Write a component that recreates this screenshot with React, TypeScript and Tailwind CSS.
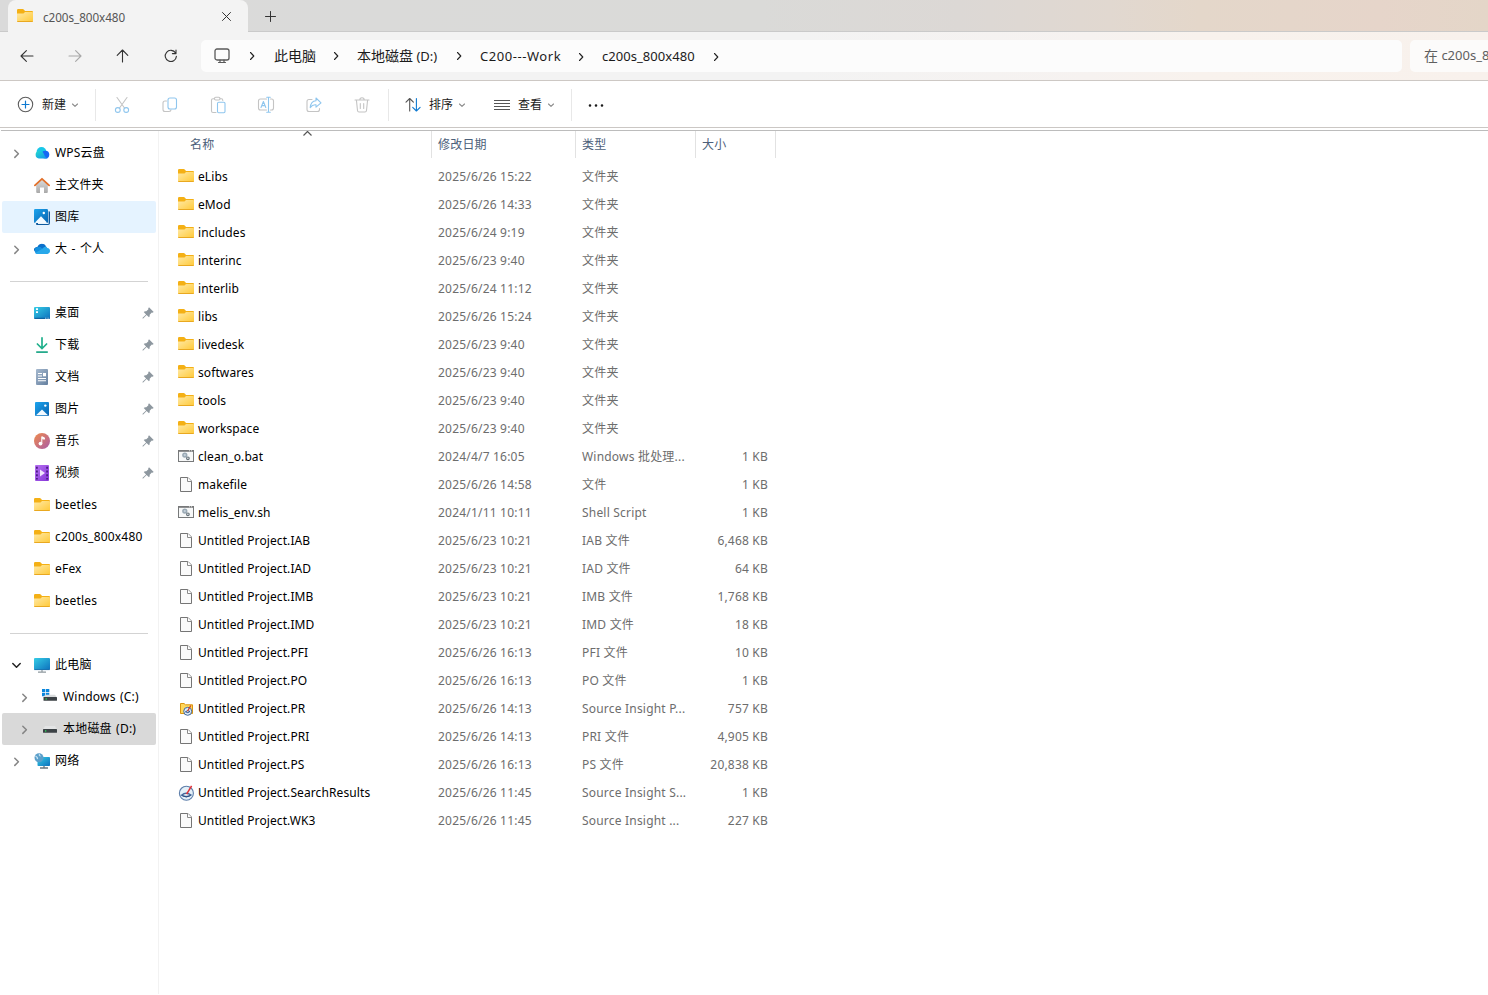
import type { ReactNode } from 'react';
import clsx from 'clsx';

type IconName =
  | 'folder' | 'file' | 'script' | 'insight' | 'search'
  | 'wps' | 'home' | 'gallery' | 'onedrive' | 'desktop' | 'download' | 'document'
  | 'picture' | 'music' | 'video' | 'pc' | 'windows' | 'disk' | 'network';

type FileRow = { name: string; date: string; type: string; size?: string; icon: IconName };

type NavRow = {
  label?: string;
  icon?: IconName;
  chevron?: 'right' | 'down';
  pinned?: boolean;
  child?: boolean;
  state?: 'hover' | 'selected';
};

const FILES: FileRow[] = [
  { name: 'eLibs', date: '2025/6/26 15:22', type: '文件夹', icon: 'folder' },
  { name: 'eMod', date: '2025/6/26 14:33', type: '文件夹', icon: 'folder' },
  { name: 'includes', date: '2025/6/24 9:19', type: '文件夹', icon: 'folder' },
  { name: 'interinc', date: '2025/6/23 9:40', type: '文件夹', icon: 'folder' },
  { name: 'interlib', date: '2025/6/24 11:12', type: '文件夹', icon: 'folder' },
  { name: 'libs', date: '2025/6/26 15:24', type: '文件夹', icon: 'folder' },
  { name: 'livedesk', date: '2025/6/23 9:40', type: '文件夹', icon: 'folder' },
  { name: 'softwares', date: '2025/6/23 9:40', type: '文件夹', icon: 'folder' },
  { name: 'tools', date: '2025/6/23 9:40', type: '文件夹', icon: 'folder' },
  { name: 'workspace', date: '2025/6/23 9:40', type: '文件夹', icon: 'folder' },
  { name: 'clean_o.bat', date: '2024/4/7 16:05', type: 'Windows 批处理...', size: '1 KB', icon: 'script' },
  { name: 'makefile', date: '2025/6/26 14:58', type: '文件', size: '1 KB', icon: 'file' },
  { name: 'melis_env.sh', date: '2024/1/11 10:11', type: 'Shell Script', size: '1 KB', icon: 'script' },
  { name: 'Untitled Project.IAB', date: '2025/6/23 10:21', type: 'IAB 文件', size: '6,468 KB', icon: 'file' },
  { name: 'Untitled Project.IAD', date: '2025/6/23 10:21', type: 'IAD 文件', size: '64 KB', icon: 'file' },
  { name: 'Untitled Project.IMB', date: '2025/6/23 10:21', type: 'IMB 文件', size: '1,768 KB', icon: 'file' },
  { name: 'Untitled Project.IMD', date: '2025/6/23 10:21', type: 'IMD 文件', size: '18 KB', icon: 'file' },
  { name: 'Untitled Project.PFI', date: '2025/6/26 16:13', type: 'PFI 文件', size: '10 KB', icon: 'file' },
  { name: 'Untitled Project.PO', date: '2025/6/26 16:13', type: 'PO 文件', size: '1 KB', icon: 'file' },
  { name: 'Untitled Project.PR', date: '2025/6/26 14:13', type: 'Source Insight P...', size: '757 KB', icon: 'insight' },
  { name: 'Untitled Project.PRI', date: '2025/6/26 14:13', type: 'PRI 文件', size: '4,905 KB', icon: 'file' },
  { name: 'Untitled Project.PS', date: '2025/6/26 16:13', type: 'PS 文件', size: '20,838 KB', icon: 'file' },
  { name: 'Untitled Project.SearchResults', date: '2025/6/26 11:45', type: 'Source Insight S...', size: '1 KB', icon: 'search' },
  { name: 'Untitled Project.WK3', date: '2025/6/26 11:45', type: 'Source Insight ...', size: '227 KB', icon: 'file' },
];

// A row without a label is a separator
const NAV: NavRow[] = [
  { label: 'WPS云盘', icon: 'wps', chevron: 'right' },
  { label: '主文件夹', icon: 'home' },
  { label: '图库', icon: 'gallery', state: 'hover' },
  { label: '大 - 个人', icon: 'onedrive', chevron: 'right' },
  {},
  { label: '桌面', icon: 'desktop', pinned: true },
  { label: '下载', icon: 'download', pinned: true },
  { label: '文档', icon: 'document', pinned: true },
  { label: '图片', icon: 'picture', pinned: true },
  { label: '音乐', icon: 'music', pinned: true },
  { label: '视频', icon: 'video', pinned: true },
  { label: 'beetles', icon: 'folder' },
  { label: 'c200s_800x480', icon: 'folder' },
  { label: 'eFex', icon: 'folder' },
  { label: 'beetles', icon: 'folder' },
  {},
  { label: '此电脑', icon: 'pc', chevron: 'down' },
  { label: 'Windows (C:)', icon: 'windows', chevron: 'right', child: true },
  { label: '本地磁盘 (D:)', icon: 'disk', chevron: 'right', child: true, state: 'selected' },
  { label: '网络', icon: 'network', chevron: 'right' },
];

const ICONS: Record<IconName, ReactNode> = {
  folder: (
    <>
      <path d="M0 1.2Q0 0 1.2 0H5.6Q6.4 0 7 .7L8 2H15Q16 2 16 3V6H0z" fill="#f4b015" />
      <path d="M0 4.6H6.5L8 3H15.2Q16 3 16 3.8V12Q16 13 15 13H1Q0 13 0 12z" fill="url(#folderFill)" />
      <path d="M.3 12.5H15.7" stroke="#e9a820" />
    </>
  ),
  file: (
    <>
      <path d="M2.5.5H10L13.5 4V14.5H2.5z" fill="#fafafa" stroke="#757575" />
      <path d="M9.5.5V4.5H13.5" fill="#fff" stroke="#8a8a8a" />
    </>
  ),
  script: (
    <>
      <rect x=".5" y="1.5" width="15" height="11" fill="#f7f8f8" stroke="#77797a" />
      <path d="M0 2H16" stroke="#77797a" strokeWidth="1.6" />
      <path d="M11 1.8H15" stroke="#dedede" strokeWidth="1" strokeDasharray="1 1" />
      <circle cx="6.8" cy="6.1" r="1.9" fill="#c4d0d9" stroke="#9aa9b4" strokeWidth="1.5" />
      <circle cx="9.9" cy="9.3" r="1.3" fill="#fff" stroke="#66727a" strokeWidth="1.2" />
    </>
  ),
  insight: (
    <>
      <path d="M2.5 2.5H6L7.5 3.8H14.5V12.5H2.5z" fill="#ffd75a" stroke="#d99411" />
      <circle cx="9.7" cy="10.3" r="4" fill="#dcebf6" stroke="#44689a" />
      <path d="M7.4 10.8Q9.5 8.7 12 10.5Q10 12.7 7.4 10.8" fill="#fff" stroke="#2d5590" />
      <path d="M9.5 10.3L12.8 4.5" stroke="#cf3f28" strokeWidth="1.3" />
    </>
  ),
  search: (
    <>
      <circle cx="8.4" cy="8.2" r="7" fill="#e4f0f8" stroke="#5d7eaa" strokeWidth="1.1" />
      <path d="M3.5 10.2Q8 6.5 13 10Q8.3 13 3.5 10.2z" fill="#fff" stroke="#45699c" strokeWidth="1.4" />
      <path d="M4.5 10.8Q8.5 13.2 12.5 10.6" fill="none" stroke="#274b80" />
      <path d="M8.6 9.2L13.6 .8" stroke="#e03036" strokeWidth="1.5" />
    </>
  ),
  wps: (
    <>
      <circle cx="7.5" cy="7" r="4.9" fill="#18c7e8" />
      <circle cx="11.4" cy="9.6" r="3.9" fill="#1668f3" />
      <path d="M4.8 6Q8.5 5.4 10 9.2T14 13.5H4.8A3.8 3.8 0 0 1 4.8 6z" fill="url(#wpsFill)" />
    </>
  ),
  home: (
    <>
      <path d="M2.2 8L8 2.6L13.8 8V15Q13.8 16 12.8 16H10V10.5H6V16H3.2Q2.2 16 2.2 15z" fill="url(#homeFill)" />
      <path d="M.9 8.4L8 1.8L15.1 8.4" fill="none" stroke="#e2702a" strokeWidth="1.8" strokeLinecap="round" strokeLinejoin="round" />
    </>
  ),
  gallery: (
    <>
      <path d="M4 2.2H15Q16 2.2 16 3.2V14Q16 16 14 16H3Q2 16 2 15z" fill="#0f5a9e" />
      <path d="M4 2H14.6V15H4z" fill="#e8f4fc" />
      <rect width="14" height="14" rx="1.2" fill="url(#blueFill)" />
      <circle cx="9.8" cy="4" r="1.2" fill="#fff" />
      <path d="M1 13.6L7 7.3L13 13.6Q12.6 14 12 14H2z" fill="#f3faff" />
    </>
  ),
  onedrive: (
    <>
      <path d="M3.3 6A5 5 0 0 1 12.2 5.4Q10 6 8.5 8.5L3 11Q0 10.5 0 8.5T3.3 6z" fill="#0364b8" />
      <path d="M3.5 5.9Q6 5 8.6 7L15 10.8Q14 13 12.3 13H4A3.6 3.6 0 0 1 3.5 5.9z" fill="#1490df" />
      <path d="M8.4 7.8Q9.7 5 12.4 5.7Q13 6.1 13.3 7Q16 7.4 16 10T12.5 13H4Q2.2 13 1.2 12z" fill="#28a8ea" />
      <path d="M4.4 4.8Q7.5 1 11.5 4.4Q10.5 5 8.5 7.4Q6.3 5.8 4.4 4.8z" fill="#0b70cc" />
    </>
  ),
  desktop: (
    <>
      <rect y="2" width="16" height="12" rx="1" fill="url(#cyanFill)" />
      <path d="M.5 13.3H15.5" stroke="#0b5a9a" />
      <path d="M2 4.2H4M2 7.2H4" stroke="#fff" strokeWidth="1.8" />
      <path d="M11 13.2H15" stroke="#cde8f8" strokeWidth=".8" strokeDasharray="1 .6" />
    </>
  ),
  download: (
    <>
      <path d="M8 .8V11M3.4 7L8 11.5L12.6 7" fill="none" stroke="#20b08c" strokeWidth="1.7" strokeLinecap="round" />
      <path d="M2.2 15.1H13.8" stroke="#1ba686" strokeWidth="1.7" />
    </>
  ),
  document: (
    <>
      <rect x="2" width="12" height="16" rx="1" fill="url(#docFill)" />
      <path d="M4 4.5H8M4 7H8M4 9.5H12M4 11.8H12" stroke="#fff" strokeWidth="1.1" />
      <rect x="9" y="4" width="3" height="3.3" fill="#fff" />
    </>
  ),
  picture: (
    <>
      <rect x="1" y="1" width="14" height="14" rx="1" fill="url(#blueFill)" />
      <circle cx="11.3" cy="4.6" r="1.2" fill="#fff" />
      <path d="M2 14.3L8 8.6L14 14.3z" fill="#f3faff" />
    </>
  ),
  music: (
    <>
      <circle cx="8" cy="8" r="8" fill="url(#musicFill)" />
      <circle cx="6.5" cy="10.6" r="1.9" fill="#fff" />
      <path d="M7.8 10.6V3.7L10.4 4.8V6.2L8.2 5.6" fill="#fff" stroke="#fff" strokeWidth="1" />
    </>
  ),
  video: (
    <>
      <rect x="1" width="14" height="16" rx="1" fill="url(#videoFill)" />
      <path d="M2.9 1.8V14.5M13.1 1.8V14.5" stroke="#4b1d85" strokeWidth="1.8" strokeDasharray="2 1.7" />
      <path d="M6 4.6L11 8L6 11.4z" fill="#f1e5fc" />
    </>
  ),
  pc: (
    <>
      <rect y="1" width="16" height="12" rx="1" fill="url(#cyanFill)" />
      <path d="M.3 12.6H15.7" stroke="#1c6da8" strokeWidth=".8" />
      <path d="M8 13V15M4 15.2H12" stroke="#8f999f" strokeWidth="1.2" />
    </>
  ),
  windows: (
    <>
      <path d="M0 0H3.3V3.3H0zM4 0H7.3V3.3H4zM0 4H3.3V7.3H0zM4 4H7.3V7.3H4z" fill="#0a86dc" />
      <path d="M3 5.8H13L15 8.5H1.5z" fill="#d9dcdd" />
      <rect x="1.5" y="8" width="13.5" height="3.8" rx=".5" fill="#3c4246" />
      <rect x="3.5" y="9.3" width="1.3" height="1.3" fill="#2de35b" />
    </>
  ),
  disk: (
    <>
      <path d="M3 5H13L15 8.5H1z" fill="#e3e4e5" />
      <rect x="1" y="8" width="14" height="3.8" rx=".5" fill="#3c4246" />
      <rect x="3" y="9.3" width="1.3" height="1.3" fill="#2de35b" />
    </>
  ),
  network: (
    <>
      <rect x="3.5" y="4" width="12.5" height="9" rx=".8" fill="url(#cyanFill)" />
      <path d="M10 13V15M6 15H14" stroke="#68767f" strokeWidth="1.3" />
      <circle cx="5" cy="4.8" r="4.5" fill="#5b9fca" />
      <path d="M1.5 2.9Q4 4.4 3.4 6.1M5.4 1Q4.8 2.5 6.5 3.2" fill="none" stroke="#c5e2f2" strokeWidth="1.2" />
    </>
  ),
};

function IconDefs() {
  return (
    <svg width="0" height="0" className="absolute">
      <defs>
        <linearGradient id="folderFill" x1="0" y1="0" x2="1" y2="1">
          <stop offset="0" stopColor="#ffe9a6" />
          <stop offset="1" stopColor="#ffc937" />
        </linearGradient>
        <linearGradient id="wpsFill" x1="0" y1="0" x2="1" y2="1">
          <stop offset="0" stopColor="#22dccb" />
          <stop offset="1" stopColor="#128df0" />
        </linearGradient>
        <linearGradient id="homeFill" x1="0" y1="0" x2="0" y2="1">
          <stop offset="0" stopColor="#dcdcdc" />
          <stop offset="1" stopColor="#a9a9a9" />
        </linearGradient>
        <linearGradient id="blueFill" x1="0" y1="0" x2="1" y2="1">
          <stop offset="0" stopColor="#1ca4ee" />
          <stop offset="1" stopColor="#0863b0" />
        </linearGradient>
        <linearGradient id="cyanFill" x1="0" y1="0" x2="1" y2="1">
          <stop offset="0" stopColor="#35cde6" />
          <stop offset="1" stopColor="#0d70bd" />
        </linearGradient>
        <linearGradient id="docFill" x1="0" y1="0" x2="1" y2="1">
          <stop offset="0" stopColor="#a6b9cf" />
          <stop offset="1" stopColor="#647f9f" />
        </linearGradient>
        <linearGradient id="musicFill" x1="0" y1="0" x2="1" y2="1">
          <stop offset="0" stopColor="#f08b4b" />
          <stop offset="1" stopColor="#a95ba8" />
        </linearGradient>
        <linearGradient id="videoFill" x1="0" y1="0" x2="1" y2="1">
          <stop offset="0" stopColor="#b56ff0" />
          <stop offset="1" stopColor="#8636d8" />
        </linearGradient>
      </defs>
    </svg>
  );
}

function Icon({ name, className }: { name: IconName; className?: string }) {
  return (
    <svg width="16" height="16" viewBox="0 0 16 16" className={clsx('shrink-0 overflow-visible', className)}>
      {ICONS[name]}
    </svg>
  );
}

function Line({ children, className, size = 18 }: { children: ReactNode; className?: string; size?: number }) {
  return (
    <svg
      width={size}
      height={size}
      viewBox={`0 0 ${size} ${size}`}
      fill="none"
      stroke="currentColor"
      strokeWidth="1.1"
      strokeLinecap="round"
      strokeLinejoin="round"
      className={clsx('shrink-0', className)}
    >
      {children}
    </svg>
  );
}

function TitleBar() {
  return (
    <div className="flex h-8 items-end border-b border-[#cacaca] bg-[linear-gradient(90deg,#dadada_0,#dadad8_760px,#dcd8d5_960px,#e1d8d0_1110px,#e4d7ca_1200px,#e6d5ca_1380px,#e4d6c8_1488px)] pl-2">
      <div className="-mb-px flex h-8 w-60 items-center rounded-t-lg bg-[#f3f3f3] pl-[9px] pr-[14px]">
        <Icon name="folder" className="mt-[2px]" />
        <span className="ml-[10px] mt-px grow text-[11.7px] leading-4 tracking-[-0.05px] text-[#555]">c200s_800x480</span>
        <Line size={15} className="text-[#333]">
          <path d="M3.5 3.5L11.5 11.5M11.5 3.5L3.5 11.5" strokeWidth="1" />
        </Line>
      </div>
      <Line size={15} className="mb-[7px] ml-[15px] text-[#333]">
        <path d="M7.5 2.5V12.5M2.5 7.5H12.5" strokeWidth="1" />
      </Line>
    </div>
  );
}

function Crumb({ cjk, latin, className }: { cjk?: string; latin?: string; className: string }) {
  return (
    <div className={clsx('flex shrink-0 items-center', className)}>
      <span className="grow whitespace-pre">
        {cjk && <span className="text-sm">{cjk}</span>}
        {latin}
      </span>
      <Line size={10} className="text-[#222]">
        <path d="M3.5 1.5L6.8 5L3.5 8.5" />
      </Line>
    </div>
  );
}

function AddressBar() {
  return (
    <div className="flex h-[49px] items-center border-b border-[#cdc8c4] bg-[linear-gradient(90deg,#f3f3f3_0,#f3f3f3_800px,#f6f2f0_1090px,#f8f2ed_1200px,#f8f1ec_1488px)]">
      <div className="flex w-[201px] shrink-0 gap-[30px] pl-[18px] text-[#333]">
        <Line><path d="M15 9H3.2M8.4 3.6L3 9L8.4 14.4" /></Line>
        <Line className="text-[#a8a8a8]"><path d="M3 9H14.8M9.6 3.6L15 9L9.6 14.4" /></Line>
        <Line><path d="M8.5 15V3.2M3.2 8.4L8.5 3L13.8 8.4" /></Line>
        <Line><path d="M13.6 6A5.6 5.6 0 1 0 14.4 9.4M14 3V6.6H10.4" /></Line>
      </div>
      <div className="flex h-8 w-[1201px] shrink-0 items-center rounded-[5px] bg-[#fcfcfc] pl-3 text-[13px] text-[#1b1b1b]">
        <Line className="text-[#5a5a5a]">
          <rect x="2" y="2" width="14" height="11" rx="2" strokeWidth="1.3" />
          <path d="M7 13V15.3M11 13V15.3M5.5 15.5H12.5" strokeWidth="1.2" />
        </Line>
        <Line size={10} className="ml-4 text-[#222]">
          <path d="M3.5 1.5L6.8 5L3.5 8.5" />
        </Line>
        <Crumb cjk="此电脑" className="ml-[17px] w-[67px]" />
        <Crumb cjk="本地磁盘" latin=" (D:)" className="ml-4 w-[107px]" />
        <Crumb latin="C200---Work" className="ml-4 w-[106px] pt-px tracking-[0.55px]" />
        <Crumb latin="c200s_800x480" className="ml-4 w-[119px] pt-px tracking-[0.05px]" />
      </div>
      <div className="ml-2 flex h-8 grow items-center overflow-hidden whitespace-pre rounded-l-[5px] bg-[#fcfbfa] pl-[14px] text-[13px] text-[#5f5f5f]">
        <span className="text-sm">在</span> c200s_800x480
      </div>
    </div>
  );
}

function Caret({ className }: { className?: string }) {
  return (
    <Line size={8} className={clsx('text-[#8b8b8b]', className)}>
      <path d="M1.5 3L4 5.4L6.5 3" />
    </Line>
  );
}

function Toolbar() {
  const blue = '#8fc6ee';
  return (
    <div className="flex h-[47px] items-center border-b border-[#cbc7c4] pl-[17px] pt-[2px] text-xs text-[#1b1b1b]">
      <div className="flex w-[78px] items-center">
        <Line className="text-[#5c5c5c]">
          <circle cx="8.5" cy="8.5" r="7.2" />
          <path d="M8.5 5V12M5 8.5H12" stroke="#0f7ad1" strokeWidth="1.2" />
        </Line>
        <span className="ml-[7px]">新建</span>
        <Caret className="ml-[5px]" />
      </div>
      <div className="h-8 w-px bg-[#e8e8e8]" />
      <div className="flex w-[292px] gap-[30px] pl-[17px] text-[#c4c4c4]">
        <Line>
          <path d="M4 1.5L11.5 12M14 1.5L6.5 12" />
          <circle cx="4.8" cy="14" r="2.4" stroke={blue} />
          <circle cx="13.2" cy="14" r="2.4" stroke={blue} />
        </Line>
        <Line>
          <path d="M5.5 5H4Q2 5 2 7V13.5Q2 15.5 4 15.5H8Q10 15.5 10 13.8" />
          <rect x="7" y="2" width="8.5" height="11" rx="2" stroke={blue} />
        </Line>
        <Line>
          <path d="M7 16.5H4Q2.5 16.5 2.5 15V4Q2.5 2.8 4 2.8H5.5M11 2.8H12.5Q13.8 2.8 13.8 4.5" />
          <rect x="5.5" y="1.3" width="5.5" height="2.7" rx="1.2" />
          <rect x="8.5" y="6.2" width="7.5" height="10.5" rx="1.2" stroke={blue} />
        </Line>
        <Line>
          <path d="M9.5 3H3.5Q1.5 3 1.5 5V12Q1.5 14 3.5 14H9.5M13.5 3H14.5Q16.5 3 16.5 5V12Q16.5 14 14.5 14H13.5" />
          <path d="M9.7 1.2H13.3M11.5 1.2V16.3M9.7 16.3H13.3M4 11.5L6.4 5.5L8.8 11.5M4.9 9.6H7.9" stroke={blue} />
        </Line>
        <Line>
          <path d="M7 3.5H4Q2 3.5 2 5.5V13.5Q2 15.5 4 15.5H12.5Q14.5 15.5 14.5 13.5V12.5" />
          <path d="M11 2L16 6.8L11 11.2V8.8Q7.5 8.3 5.2 11.6Q5.8 5 11 4.7z" stroke={blue} />
        </Line>
        <Line>
          <path d="M2 4H16M6.8 4Q6.8 1.8 9 1.8T11.2 4M3.4 4L4.5 14.5Q4.7 16 6 16H12Q13.3 16 13.5 14.5L14.6 4M7.3 7.5V12.5M10.7 7.5V12.5" />
        </Line>
      </div>
      <div className="h-8 w-px bg-[#e8e8e8]" />
      <div className="flex w-[89px] items-center pl-[15px]">
        <Line className="text-[#555]">
          <path d="M5.7 15V2.5M2 6.2L5.7 2.5L9.4 6.2" />
          <path d="M12.4 2.5V15M8.7 11.3L12.4 15L16.1 11.3" stroke="#0f7ad1" />
        </Line>
        <span className="ml-[7px]">排序</span>
        <Caret className="ml-[5px]" />
      </div>
      <div className="flex w-[93px] items-center pl-[15px]">
        <Line className="text-[#555]">
          <path d="M1 4.5H17M1 7.5H17M1 10.5H17M1 13.5H17" strokeWidth="1" strokeLinecap="butt" />
        </Line>
        <span className="ml-[7px]">查看</span>
        <Caret className="ml-[5px]" />
      </div>
      <div className="h-8 w-px bg-[#e8e8e8]" />
      <Line className="ml-[15px]">
        <path d="M3 9.5H3.01M9 9.5H9.01M15 9.5H15.01" stroke="#1b1b1b" strokeWidth="2.6" />
      </Line>
    </div>
  );
}

function NavItem({ row }: { row: NavRow }) {
  if (!row.label) {
    return (
      <div className="flex h-8 items-center pl-2 pr-2">
        <div className="h-px grow bg-[#d3d3d3]" />
      </div>
    );
  }

  return (
    <div
      className={clsx(
        'flex h-8 items-center rounded-[2px] pr-[2px]',
        row.child ? 'pl-[17px]' : 'pl-[9px]',
        row.state === 'hover' && 'bg-[#e5f3ff]',
        row.state === 'selected' && 'bg-[#d9d9d9]',
      )}
    >
      <div className="w-[23px] shrink-0">
        {row.chevron && (
          <Line size={11} className={row.chevron === 'down' ? 'text-[#222]' : 'text-[#858585]'}>
            {row.chevron === 'down' ? (
              <path d="M1.8 3.5L5.5 7.2L9.2 3.5" strokeWidth="1.5" />
            ) : (
              <path d="M3.8 2.2L7.4 5.8L3.8 9.4" strokeWidth="1.5" />
            )}
          </Line>
        )}
      </div>
      <Icon name={row.icon!} className={clsx(row.icon === 'folder' && 'mt-[2px]')} />
      <span className="ml-[5px] grow whitespace-nowrap text-black [word-spacing:1px]">{row.label}</span>
      {row.pinned && (
        <svg width="12" height="12" viewBox="0 0 12 12" className="-mt-px" fill="#8d979f">
          <path d="M7 .3L11.7 5L10.5 5.8L9.8 5.6L7.7 7.7Q8 9.3 7 10.3L4.6 7.9L1.2 11.4L.5 11.5L.6 10.8L4.1 7.4L1.7 5Q2.7 4 4.3 4.3L6.4 2.2L6.2 1.5z" />
        </svg>
      )}
    </div>
  );
}

function FileList() {
  return (
    <div className="grow">
      <div className="relative flex h-[27px] text-[#4c607a] leading-[27px]">
        <Line size={10} className="absolute left-[144px] top-[-3px] text-[#555]">
          <path d="M.5 7.5L4.5 3.5L8.5 7.5" strokeLinecap="butt" />
        </Line>
        <div className="w-[273px] border-r border-[#e2e2e2] pl-[31px]">名称</div>
        <div className="w-36 border-r border-[#e2e2e2] pl-[6px]">修改日期</div>
        <div className="w-[120px] border-r border-[#e2e2e2] pl-[6px]">类型</div>
        <div className="w-20 border-r border-[#e2e2e2] pl-[6px]">大小</div>
      </div>
      <div className="mt-[5px]">
        {FILES.map((file) => (
          <div key={file.name} className="flex h-7 items-center text-[#6d6d6d]">
            <div className="flex w-[273px] items-center pl-[19px] text-black">
              <Icon name={file.icon} />
              <span className="ml-1 tracking-[0.1px]">{file.name}</span>
            </div>
            <div className="w-36 pl-[6px]">{file.date}</div>
            <div className="w-[120px] whitespace-nowrap pl-[6px]">{file.type}</div>
            <div className="w-20 pr-2 text-right">{file.size}</div>
          </div>
        ))}
      </div>
    </div>
  );
}

export default function App() {
  return (
    <div className="flex h-[995px] w-[1488px] flex-col overflow-hidden bg-white font-['Noto_Sans','Noto_Sans_CJK_SC',sans-serif]">
      <IconDefs />
      <TitleBar />
      <AddressBar />
      <Toolbar />
      <div className="mt-[2px] ml-px h-px shrink-0 bg-[#bcbcbc]" />
      <div className="flex h-[863px] text-xs leading-4 tracking-[0.2px]">
        <div className="w-[159px] shrink-0 border-r border-[#f2f2f2] pl-[2px] pr-[2px] pt-[6px]">
          {NAV.map((row, i) => (
            <NavItem key={i} row={row} />
          ))}
        </div>
        <FileList />
      </div>
    </div>
  );
}
